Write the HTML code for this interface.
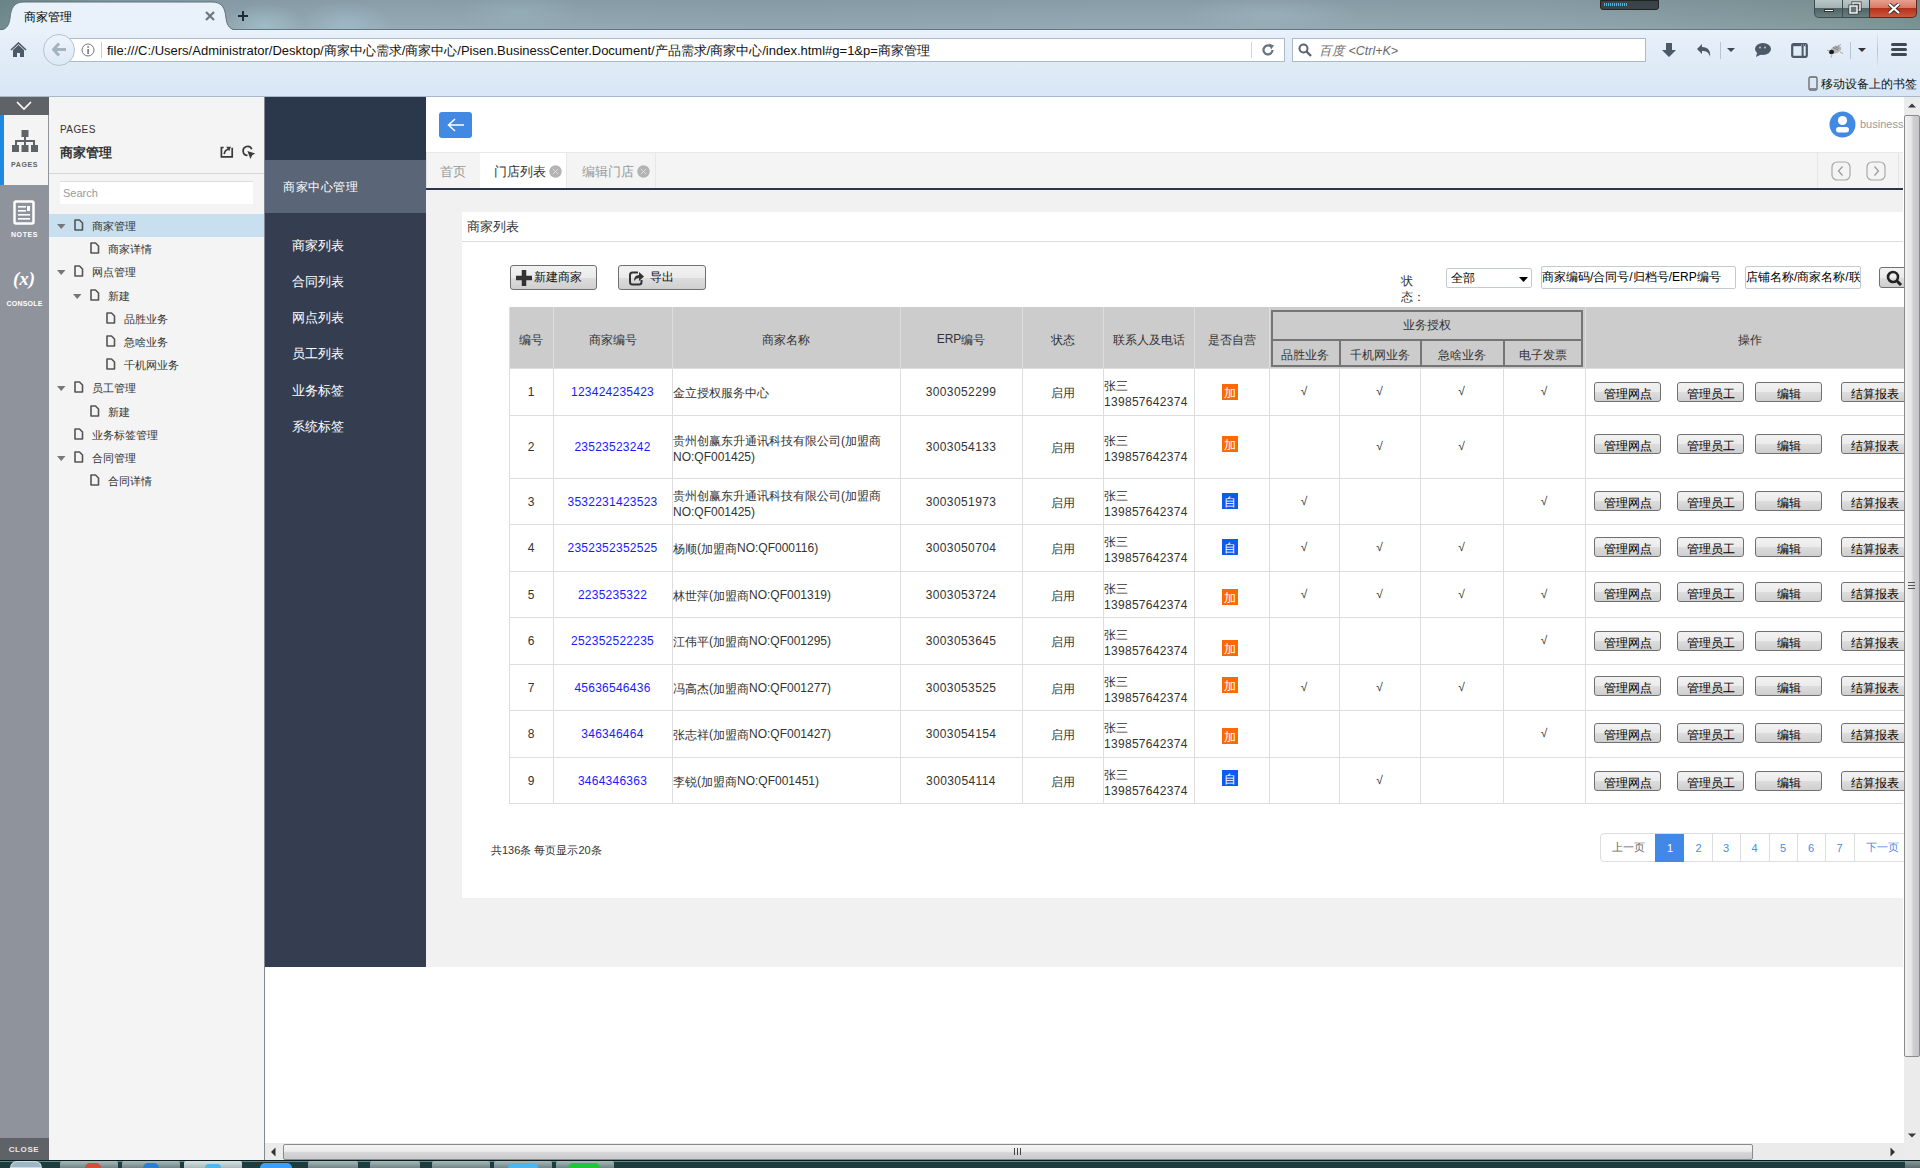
<!DOCTYPE html>
<html><head><meta charset="utf-8">
<style>
*{box-sizing:border-box;margin:0;padding:0}
html,body{width:1920px;height:1168px;overflow:hidden;background:#fff;font-family:"Liberation Sans",sans-serif;font-size:12px;color:#333;font-weight:500}
.a{position:absolute}
.nw{white-space:nowrap}
.c{position:relative;top:1px}
#titlebar{left:0;top:0;width:1920px;height:30px;background:radial-gradient(ellipse 40px 22px at 265px 26px,rgba(170,205,215,0.55),transparent),radial-gradient(ellipse 45px 24px at 345px 26px,rgba(165,200,215,0.5),transparent),radial-gradient(ellipse 60px 20px at 520px 12px,rgba(160,190,200,0.35),transparent),radial-gradient(ellipse 90px 18px at 1270px 14px,rgba(170,195,205,0.35),transparent),linear-gradient(180deg,rgba(60,75,85,0.12),rgba(255,255,255,0.04)),linear-gradient(90deg,#6f8a8c 0%,#8aa0aa 6%,#94a9b4 20%,#8fa4af 40%,#93a8b3 60%,#8fa4ae 80%,#809799 96%,#75908f 100%)}
#navbar{left:0;top:30px;width:1920px;height:67px;background:linear-gradient(#e9f1fa 0%,#e3edf8 30%,#d8e6f5 100%);border-bottom:1px solid #a8b8c8}
#content{left:0;top:97px;width:1920px;height:1063px;background:#fff}
#taskbar{left:0;top:1160px;width:1920px;height:8px;background:#1e3b3d}
.url{left:70px;top:38px;width:1215px;height:24px;background:#fff;border:1px solid #a9bacb;border-left:none}
.srch{left:1292px;top:38px;width:354px;height:24px;background:#fff;border:1px solid #a9bacb}
.ico{fill:#4a5460}
.btn{border:1px solid #707070;border-radius:3px;background:linear-gradient(#f2f2f2 0%,#ebebeb 50%,#dddddd 51%,#cfcfcf 100%)}
</style></head>
<body>
<!-- ===== Browser chrome ===== -->
<div id="titlebar" class="a"></div>
<div class="a" style="left:0;top:29px;width:1920px;height:1px;background:#62777f"></div>
<svg class="a" style="left:0;top:0" width="260" height="31">
 <path d="M-2 30.5 C6 30.5 9 26 10 18 C11 8 14 2 24 2 L212 2 C222 2 225 8 226 18 C227 26 230 30.5 238 30.5 Z" fill="#e9f1fa"/><path d="M-2 30 C6 30 9 26 10 18 C11 8 14 2 24 2 L212 2 C222 2 225 8 226 18 C227 26 230 30 238 30" fill="none" stroke="#5e7378" stroke-width="1"/>
</svg>
<div class="a nw" style="left:24px;top:9px;font-size:12px;color:#000">商家管理</div>
<svg class="a" style="left:205px;top:11px" width="10" height="10"><path d="M1 1L9 9M9 1L1 9" stroke="#6e7780" stroke-width="2.2"/></svg>
<svg class="a" style="left:237px;top:10px" width="12" height="12"><path d="M1 6H11M6 1V11" stroke="#1e2a36" stroke-width="2"/></svg>
<!-- top-right widget -->
<div class="a" style="left:1600px;top:0;width:59px;height:10px;background:#39434a;border-radius:0 0 3px 3px;border:1px solid #222"></div>
<div class="a" style="left:1604px;top:3px;width:24px;height:3px;background:repeating-linear-gradient(90deg,#4fb4e8 0 1px,transparent 1px 2px)"></div>
<!-- window buttons -->
<div class="a" style="left:1814px;top:0;width:56px;height:18px;border:1px solid #3c4d50;border-top:none;border-radius:0 0 0 5px;background:linear-gradient(#b9c7c7 0%,#a3b3b3 45%,#4f6466 50%,#6a7e7f 100%)"></div>
<div class="a" style="left:1842px;top:0;width:1px;height:17px;background:#3c4d50"></div>
<div class="a" style="left:1869px;top:0;width:48px;height:18px;border:1px solid #5a2a20;border-top:none;border-radius:0 0 5px 0;background:linear-gradient(#e8a090 0%,#d77a66 45%,#b8301a 50%,#c65a40 100%)"></div>
<div class="a" style="left:1824px;top:9px;width:10px;height:3px;background:#fff;border:0.5px solid #333"></div>
<svg class="a" style="left:1848px;top:1px" width="14" height="14"><rect x="5" y="2" width="7" height="7" fill="none" stroke="#333" stroke-width="3"/><rect x="5" y="2" width="7" height="7" fill="none" stroke="#f4f4f4" stroke-width="1.5"/><rect x="2" y="5" width="7" height="7" fill="#62787a" stroke="#333" stroke-width="3"/><rect x="2" y="5" width="7" height="7" fill="#62787a" stroke="#f4f4f4" stroke-width="1.5"/></svg>
<svg class="a" style="left:1887px;top:3px" width="14" height="11"><path d="M2 1L12 10M12 1L2 10" stroke="#333" stroke-width="4"/><path d="M2 1L12 10M12 1L2 10" stroke="#fff" stroke-width="2.2"/></svg>

<div id="navbar" class="a"></div>
<!-- home -->
<svg class="a" style="left:10px;top:42px" width="17" height="16"><path d="M1 8L8.5 1L16 8" fill="none" stroke="#4d5966" stroke-width="1.6"/><path d="M3 8L8.5 3L14 8V15H10V11H7V15H3Z" fill="#4d5966"/></svg>
<!-- url box -->
<div class="a url"></div>
<div class="a" style="left:1251px;top:42px;width:1px;height:16px;background:#d0d6de"></div>
<!-- back btn -->
<div class="a" style="left:43px;top:34px;width:32px;height:32px;border-radius:50%;background:linear-gradient(#eef4fb,#dde9f6);border:1px solid #b3c3d3"></div>
<svg class="a" style="left:52px;top:42px" width="15" height="15"><path d="M7 1.5L1.5 7.5L7 13.5M2 7.5H14" fill="none" stroke="#a5b2bf" stroke-width="3"/></svg>
<svg class="a" style="left:81px;top:43px" width="14" height="14"><circle cx="7" cy="7" r="6" fill="none" stroke="#777" stroke-width="1"/><rect x="6.3" y="6" width="1.6" height="5" fill="#777"/><rect x="6.3" y="3.2" width="1.6" height="1.6" fill="#777"/></svg>
<div class="a" style="left:101px;top:42px;width:1px;height:16px;background:#c8cfd8"></div>
<div class="a nw" style="left:107px;top:42px;font-size:13px;color:#111">file:///C:/Users/Administrator/Desktop/商家中心需求/商家中心/Pisen.BusinessCenter.Document/产品需求/商家中心/index.html#g=1&amp;p=商家管理</div>
<svg class="a" style="left:1261px;top:43px" width="14" height="14"><path d="M11.5 7A4.5 4.5 0 1 1 9.5 3.2" fill="none" stroke="#66727e" stroke-width="2.2"/><path d="M8 0.5L13 2.5L10 6.5Z" fill="#66727e"/></svg>
<!-- search box -->
<div class="a srch"></div>
<svg class="a" style="left:1298px;top:43px" width="14" height="14"><circle cx="5.5" cy="5.5" r="4" fill="none" stroke="#5b6570" stroke-width="2"/><path d="M8.5 8.5L13 13" stroke="#5b6570" stroke-width="2.4"/></svg>
<div class="a nw" style="left:1319px;top:43px;font-size:12.5px;color:#6a6a6a;font-style:italic">百度 &lt;Ctrl+K&gt;</div>
<!-- toolbar icons -->
<svg class="a" style="left:1661px;top:42px" width="16" height="16"><path d="M5 1H11V8H15L8 15L1 8H5Z" fill="#4d5966"/></svg>
<svg class="a" style="left:1696px;top:42px" width="18" height="16"><path d="M6 2L1 7L6 12V9C10 9 13 10 14 15C15 9 12 5 6 5Z" fill="#4d5966"/></svg>
<div class="a" style="left:1720px;top:42px;width:1px;height:17px;background:#b8c4d0"></div>
<svg class="a" style="left:1727px;top:48px" width="8" height="5"><path d="M0 0H8L4 4Z" fill="#3d4853"/></svg>
<svg class="a" style="left:1754px;top:42px" width="18" height="16"><ellipse cx="9" cy="7" rx="8" ry="6" fill="#4d5966"/><path d="M3 11L2 15L8 12Z" fill="#4d5966"/><circle cx="6" cy="5.5" r="0.9" fill="#ccd"/><circle cx="11" cy="5.5" r="0.9" fill="#ccd"/></svg>
<svg class="a" style="left:1791px;top:43px" width="17" height="15"><rect x="1.2" y="1.2" width="14.6" height="12.6" rx="1.2" fill="none" stroke="#4d5966" stroke-width="2.2"/><rect x="1" y="1" width="15" height="2.2" fill="#4d5966"/><rect x="10.6" y="2" width="2" height="12" fill="#4d5966"/><circle cx="10.5" cy="2" r="0.5" fill="#dde"/><circle cx="12.5" cy="2" r="0.5" fill="#dde"/><circle cx="14.5" cy="2" r="0.5" fill="#dde"/></svg>
<svg class="a" style="left:1826px;top:43px" width="18" height="15"><ellipse cx="10" cy="6.5" rx="5.5" ry="3.6" fill="#b5b5b5" transform="rotate(-20 10 6.5)"/><path d="M7 4.5L12 7M9 3.5L13 5.5" stroke="#666" stroke-width="0.7"/><ellipse cx="5.5" cy="9" rx="2.6" ry="2.2" fill="#1e1e1e"/><path d="M1 7L4 8.5M6 12L5 14.5M14 9L17 10.5M12 3L15 1.5" stroke="#888" stroke-width="0.7"/></svg>
<div class="a" style="left:1850px;top:42px;width:1px;height:17px;background:#b8c4d0"></div>
<svg class="a" style="left:1858px;top:48px" width="8" height="5"><path d="M0 0H8L4 4Z" fill="#333"/></svg>
<div class="a" style="left:1877px;top:31px;width:1px;height:38px;background:linear-gradient(rgba(160,175,190,0),#b5c2cf,rgba(160,175,190,0))"></div>
<svg class="a" style="left:1890px;top:42px" width="18" height="15"><rect x="1" y="1" width="16" height="3" rx="1.5" fill="#3d4853"/><rect x="1" y="6" width="16" height="3" rx="1.5" fill="#3d4853"/><rect x="1" y="11" width="16" height="3" rx="1.5" fill="#3d4853"/></svg>
<!-- bookmarks -->
<svg class="a" style="left:1808px;top:76px" width="10" height="15"><rect x="1" y="1" width="8" height="13" rx="1.5" fill="none" stroke="#666" stroke-width="1.3"/><rect x="2" y="12" width="6" height="1" fill="#888"/></svg>
<div class="a nw" style="left:1821px;top:76px;font-size:12px;color:#111">移动设备上的书签</div>

<div id="content" class="a"></div>

<!-- ===== Axure left panel ===== -->
<div class="a" style="left:0;top:97px;width:49px;height:1063px;background:#8f939c"></div>
<div class="a" style="left:0;top:97px;width:49px;height:18px;background:#5f6368"></div>
<svg class="a" style="left:15px;top:100px" width="18" height="11"><path d="M2 2L9 9L16 2" fill="none" stroke="#fff" stroke-width="1.6"/></svg>
<div class="a" style="left:0;top:115px;width:48px;height:70px;background:#f4f4f4"></div>
<div class="a" style="left:0;top:115px;width:4px;height:70px;background:#1e88e5"></div>
<svg class="a" style="left:12px;top:130px" width="26" height="25"><rect x="9.5" y="0" width="7" height="7" fill="#5f6368"/><rect x="12" y="7" width="2" height="4" fill="#5f6368"/><rect x="3" y="10" width="20" height="2" fill="#5f6368"/><rect x="3" y="10" width="2" height="5" fill="#5f6368"/><rect x="12" y="10" width="2" height="5" fill="#5f6368"/><rect x="21" y="10" width="2" height="5" fill="#5f6368"/><rect x="0" y="15" width="7" height="7" fill="#5f6368"/><rect x="9.5" y="15" width="7" height="7" fill="#5f6368"/><rect x="19" y="15" width="7" height="7" fill="#5f6368"/></svg>
<div class="a nw" style="left:0;top:161px;width:49px;text-align:center;font-size:7px;letter-spacing:0.6px;font-weight:bold;color:#5f6368">PAGES</div>
<svg class="a" style="left:13px;top:200px" width="22" height="26"><rect x="1.5" y="1.5" width="19" height="22" rx="1.5" fill="none" stroke="#fff" stroke-width="2.5"/><rect x="5" y="6" width="8" height="1.6" fill="#fff"/><rect x="14" y="6" width="3" height="5" fill="#fff"/><rect x="5" y="10" width="8" height="1.6" fill="#fff"/><rect x="5" y="14" width="12" height="1.6" fill="#fff"/><rect x="5" y="18" width="12" height="1.6" fill="#fff"/></svg>
<div class="a nw" style="left:0;top:231px;width:49px;text-align:center;font-size:7px;letter-spacing:0.6px;font-weight:bold;color:#fff">NOTES</div>
<div class="a nw" style="left:0;top:268px;width:48px;text-align:center;font-family:'Liberation Serif',serif;font-style:italic;font-weight:bold;font-size:19px;color:#fff">(x)</div>
<div class="a nw" style="left:0;top:300px;width:49px;text-align:center;font-size:7px;letter-spacing:0.2px;font-weight:bold;color:#fff">CONSOLE</div>
<div class="a" style="left:0;top:1138px;width:49px;height:22px;background:#5f6368"></div>
<div class="a nw" style="left:0;top:1145px;width:48px;text-align:center;font-size:8px;letter-spacing:0.6px;font-weight:bold;color:#e8e8e8">CLOSE</div>

<div class="a" style="left:49px;top:97px;width:215px;height:1063px;background:#f4f4f4"></div>
<div class="a nw" style="left:60px;top:124px;font-size:10px;letter-spacing:0.4px;color:#333">PAGES</div>
<div class="a nw" style="left:60px;top:144px;font-size:13px;font-weight:bold;color:#333">商家管理</div>
<svg class="a" style="left:220px;top:146px" width="15" height="13"><path d="M3.6 1.5H1.4V10.8H12.2V1.8" fill="none" stroke="#3a3a3a" stroke-width="1.7"/><path d="M4.2 8.2C4.6 5.5 6 3.8 8.2 3.3" fill="none" stroke="#3a3a3a" stroke-width="1.6"/><path d="M6.2 0.8H10.9L9.2 5.2Z" fill="#3a3a3a"/></svg>
<svg class="a" style="left:242px;top:145px" width="15" height="15"><path d="M9.8 4.2A4.5 4.5 0 1 0 5.5 10.4" fill="none" stroke="#3a3a3a" stroke-width="1.7"/><path d="M5.4 6L13.2 8.6L10.2 10.2L8.4 14Z" fill="#3a3a3a"/></svg>
<div class="a" style="left:49px;top:173px;width:215px;height:1px;background:#d6d6d6"></div>
<div class="a" style="left:60px;top:181px;width:193px;height:23px;background:#fff;border-top:1px solid #dcdcdc"></div>
<div class="a nw" style="left:63px;top:187px;font-size:11px;color:#9a9a9a">Search</div>
<div class="a" style="left:49px;top:214px;width:215px;height:23px;background:#c8dff0"></div>
<svg class="a" style="left:57px;top:224px" width="9" height="6"><path d="M0 0H8.5L4.25 5Z" fill="#777"/></svg>
<svg class="a" style="left:74px;top:219px" width="10" height="12"><path d="M1 1H5.5L8.5 4V11H1Z" fill="none" stroke="#555" stroke-width="1.6" stroke-linejoin="round"/></svg>
<div class="a nw" style="left:92px;top:219px;font-size:11px;color:#333">商家管理</div>
<svg class="a" style="left:90px;top:242px" width="10" height="12"><path d="M1 1H5.5L8.5 4V11H1Z" fill="none" stroke="#555" stroke-width="1.6" stroke-linejoin="round"/></svg>
<div class="a nw" style="left:108px;top:242px;font-size:11px;color:#333">商家详情</div>
<svg class="a" style="left:57px;top:270px" width="9" height="6"><path d="M0 0H8.5L4.25 5Z" fill="#777"/></svg>
<svg class="a" style="left:74px;top:265px" width="10" height="12"><path d="M1 1H5.5L8.5 4V11H1Z" fill="none" stroke="#555" stroke-width="1.6" stroke-linejoin="round"/></svg>
<div class="a nw" style="left:92px;top:265px;font-size:11px;color:#333">网点管理</div>
<svg class="a" style="left:73px;top:294px" width="9" height="6"><path d="M0 0H8.5L4.25 5Z" fill="#777"/></svg>
<svg class="a" style="left:90px;top:289px" width="10" height="12"><path d="M1 1H5.5L8.5 4V11H1Z" fill="none" stroke="#555" stroke-width="1.6" stroke-linejoin="round"/></svg>
<div class="a nw" style="left:108px;top:289px;font-size:11px;color:#333">新建</div>
<svg class="a" style="left:106px;top:312px" width="10" height="12"><path d="M1 1H5.5L8.5 4V11H1Z" fill="none" stroke="#555" stroke-width="1.6" stroke-linejoin="round"/></svg>
<div class="a nw" style="left:124px;top:312px;font-size:11px;color:#333">品胜业务</div>
<svg class="a" style="left:106px;top:335px" width="10" height="12"><path d="M1 1H5.5L8.5 4V11H1Z" fill="none" stroke="#555" stroke-width="1.6" stroke-linejoin="round"/></svg>
<div class="a nw" style="left:124px;top:335px;font-size:11px;color:#333">急啥业务</div>
<svg class="a" style="left:106px;top:358px" width="10" height="12"><path d="M1 1H5.5L8.5 4V11H1Z" fill="none" stroke="#555" stroke-width="1.6" stroke-linejoin="round"/></svg>
<div class="a nw" style="left:124px;top:358px;font-size:11px;color:#333">千机网业务</div>
<svg class="a" style="left:57px;top:386px" width="9" height="6"><path d="M0 0H8.5L4.25 5Z" fill="#777"/></svg>
<svg class="a" style="left:74px;top:381px" width="10" height="12"><path d="M1 1H5.5L8.5 4V11H1Z" fill="none" stroke="#555" stroke-width="1.6" stroke-linejoin="round"/></svg>
<div class="a nw" style="left:92px;top:381px;font-size:11px;color:#333">员工管理</div>
<svg class="a" style="left:90px;top:405px" width="10" height="12"><path d="M1 1H5.5L8.5 4V11H1Z" fill="none" stroke="#555" stroke-width="1.6" stroke-linejoin="round"/></svg>
<div class="a nw" style="left:108px;top:405px;font-size:11px;color:#333">新建</div>
<svg class="a" style="left:74px;top:428px" width="10" height="12"><path d="M1 1H5.5L8.5 4V11H1Z" fill="none" stroke="#555" stroke-width="1.6" stroke-linejoin="round"/></svg>
<div class="a nw" style="left:92px;top:428px;font-size:11px;color:#333">业务标签管理</div>
<svg class="a" style="left:57px;top:456px" width="9" height="6"><path d="M0 0H8.5L4.25 5Z" fill="#777"/></svg>
<svg class="a" style="left:74px;top:451px" width="10" height="12"><path d="M1 1H5.5L8.5 4V11H1Z" fill="none" stroke="#555" stroke-width="1.6" stroke-linejoin="round"/></svg>
<div class="a nw" style="left:92px;top:451px;font-size:11px;color:#333">合同管理</div>
<svg class="a" style="left:90px;top:474px" width="10" height="12"><path d="M1 1H5.5L8.5 4V11H1Z" fill="none" stroke="#555" stroke-width="1.6" stroke-linejoin="round"/></svg>
<div class="a nw" style="left:108px;top:474px;font-size:11px;color:#333">合同详情</div>
<div class="a" style="left:264px;top:97px;width:1px;height:1063px;background:#828891"></div>

<!-- ===== dark sidebar ===== -->
<div class="a" style="left:265px;top:97px;width:161px;height:870px;background:#353e50"></div>
<div class="a" style="left:265px;top:97px;width:161px;height:63px;background:#2b384b"></div>
<div class="a" style="left:265px;top:160px;width:161px;height:53px;background:#5b6578"></div>
<div class="a nw" style="left:283px;top:179px;font-size:12px;letter-spacing:0.5px;color:#fff">商家中心管理</div>
<div class="a nw" style="left:292px;top:237px;font-size:13px;color:#fff">商家列表</div>
<div class="a nw" style="left:292px;top:273px;font-size:13px;color:#fff">合同列表</div>
<div class="a nw" style="left:292px;top:309px;font-size:13px;color:#fff">网点列表</div>
<div class="a nw" style="left:292px;top:345px;font-size:13px;color:#fff">员工列表</div>
<div class="a nw" style="left:292px;top:382px;font-size:13px;color:#fff">业务标签</div>
<div class="a nw" style="left:292px;top:418px;font-size:13px;color:#fff">系统标签</div>
<!-- ===== main header ===== -->
<div class="a" style="left:426px;top:97px;width:1477px;height:55px;background:#fff"></div>
<div class="a" style="left:439px;top:112px;width:33px;height:26px;border-radius:3px;background:#4289e4"></div>
<svg class="a" style="left:446px;top:117px" width="20" height="16"><path d="M9 2L2.5 8L9 14M3 8H18" fill="none" stroke="#fff" stroke-width="1.5"/></svg>
<svg class="a" style="left:1829px;top:111px" width="27" height="27"><circle cx="13.5" cy="13.5" r="13" fill="#4289e4"/><circle cx="13.5" cy="9.5" r="4.6" fill="#fff"/><rect x="7" y="16" width="13" height="5.5" rx="2.7" fill="#fff"/></svg>
<div class="a nw" style="left:1860px;top:118px;font-size:11px;color:#9a9a9a">business</div>
<!-- tab bar -->
<div class="a" style="left:426px;top:152px;width:1477px;height:36px;background:#f4f4f4;border-top:1px solid #e9e9e9;border-left:1px solid #e2e2e2"></div>
<div class="a" style="left:480px;top:153px;width:87px;height:35px;background:#fff"></div>
<div class="a" style="left:566px;top:152px;width:1px;height:36px;background:#e8e8e8"></div>
<div class="a" style="left:655px;top:152px;width:1px;height:36px;background:#e8e8e8"></div>
<div class="a nw" style="left:440px;top:164px;font-size:12.5px;color:#999">首页</div>
<div class="a nw" style="left:494px;top:164px;font-size:12.5px;color:#333">门店列表</div>
<div class="a nw" style="left:582px;top:164px;font-size:12.5px;color:#999">编辑门店</div>
<svg class="a" style="left:549px;top:165px" width="13" height="13"><circle cx="6.5" cy="6.5" r="6.2" fill="#b3b3b3"/><path d="M3.8 3.8L9.2 9.2M9.2 3.8L3.8 9.2" stroke="#e2e2e2" stroke-width="0.9"/></svg>
<svg class="a" style="left:637px;top:165px" width="13" height="13"><circle cx="6.5" cy="6.5" r="6.2" fill="#b3b3b3"/><path d="M3.8 3.8L9.2 9.2M9.2 3.8L3.8 9.2" stroke="#e2e2e2" stroke-width="0.9"/></svg>
<div class="a" style="left:1817px;top:152px;width:1px;height:36px;background:#e6e6e6"></div>
<div class="a" style="left:1898px;top:152px;width:1px;height:36px;background:#e6e6e6"></div>
<svg class="a" style="left:1831px;top:161px" width="20" height="20"><rect x="1" y="1" width="18" height="18" rx="5" fill="none" stroke="#a8a8a8" stroke-width="1.2"/><path d="M11.5 5.5L7.5 10L11.5 14.5" fill="none" stroke="#999" stroke-width="1.2"/></svg>
<svg class="a" style="left:1866px;top:161px" width="20" height="20"><rect x="1" y="1" width="18" height="18" rx="5" fill="none" stroke="#a8a8a8" stroke-width="1.2"/><path d="M8.5 5.5L12.5 10L8.5 14.5" fill="none" stroke="#999" stroke-width="1.2"/></svg>
<div class="a" style="left:426px;top:188px;width:1477px;height:2px;background:#2b3649"></div>
<!-- content bg -->
<div class="a" style="left:426px;top:190px;width:1477px;height:777px;background:#f1f1f1"></div>
<div class="a" style="left:462px;top:212px;width:1441px;height:686px;background:#fff"></div>
<div class="a nw" style="left:467px;top:218px;font-size:13px;color:#333">商家列表</div>
<div class="a" style="left:462px;top:241px;width:1441px;height:1px;background:#ddd"></div>
<!--TABLE-->
<div class="a btn" style="left:510px;top:265px;width:87px;height:25px"></div>
<svg class="a" style="left:516px;top:270px" width="16" height="16"><path d="M6 0H10V6H16V10H10V16H6V10H0V6H6Z" fill="#333" stroke="#333" stroke-width="0.5" stroke-linejoin="round"/></svg>
<div class="a nw" style="left:534px;top:270px;font-size:12px;line-height:14px;color:#111">新建商家</div>
<div class="a btn" style="left:618px;top:265px;width:88px;height:25px"></div>
<svg class="a" style="left:628px;top:269px" width="17" height="17"><path d="M10 3.5H4.5Q2 3.5 2 6V13Q2 15.5 4.5 15.5H11Q13.5 15.5 13.5 13V11" fill="none" stroke="#333" stroke-width="2"/><path d="M6 12Q6 6 11 6V3L16 7.5L11 12V9Q8 9 6 12Z" fill="#333"/></svg>
<div class="a nw" style="left:650px;top:270px;font-size:12px;line-height:14px;color:#111">导出</div>
<div class="a nw" style="left:1401px;top:273px;font-size:12px;line-height:16px;color:#333">状<br>态：</div>
<div class="a" style="left:1446px;top:268px;width:86px;height:20px;background:#fff;border:1px solid #c4c9d2;border-radius:2px"></div>
<div class="a nw" style="left:1451px;top:271px;font-size:12px;line-height:14px;color:#000">全部</div>
<svg class="a" style="left:1519px;top:277px" width="9" height="5"><path d="M0 0H9L4.5 5Z" fill="#000"/></svg>
<div class="a" style="left:1541px;top:266px;width:195px;height:23px;background:#fff;border:1px solid #c4c9d2;border-radius:2px"></div>
<div class="a nw" style="left:1542px;top:270px;font-size:12px;line-height:14px;color:#000">商家编码/合同号/归档号/ERP编号</div>
<div class="a" style="left:1745px;top:266px;width:116px;height:23px;background:#fff;border:1px solid #c4c9d2;border-radius:2px;overflow:hidden"><div class="nw" style="position:absolute;left:0;top:3px;font-size:12px;line-height:14px;color:#000">店铺名称/商家名称/联系人</div></div>
<div class="a btn" style="left:1879px;top:267px;width:40px;height:21px"></div>
<svg class="a" style="left:1886px;top:270px" width="18" height="16"><circle cx="7" cy="7" r="5" fill="none" stroke="#222" stroke-width="2.6"/><path d="M10.5 10.5L15 15" stroke="#222" stroke-width="3"/></svg>

<div class="a" style="left:509px;top:307px;width:1400px;height:61px;background:#ccc"></div>
<div class="a" style="left:509px;top:307px;width:1px;height:496px;background:#ddd"></div>
<div class="a" style="left:553px;top:307px;width:1px;height:496px;background:#ddd"></div>
<div class="a" style="left:672px;top:307px;width:1px;height:496px;background:#ddd"></div>
<div class="a" style="left:900px;top:307px;width:1px;height:496px;background:#ddd"></div>
<div class="a" style="left:1022px;top:307px;width:1px;height:496px;background:#ddd"></div>
<div class="a" style="left:1103px;top:307px;width:1px;height:496px;background:#ddd"></div>
<div class="a" style="left:1194px;top:307px;width:1px;height:496px;background:#ddd"></div>
<div class="a" style="left:1269px;top:307px;width:1px;height:496px;background:#ddd"></div>
<div class="a" style="left:1339px;top:368px;width:1px;height:435px;background:#ddd"></div>
<div class="a" style="left:1420px;top:368px;width:1px;height:435px;background:#ddd"></div>
<div class="a" style="left:1503px;top:368px;width:1px;height:435px;background:#ddd"></div>
<div class="a" style="left:1585px;top:307px;width:1px;height:496px;background:#ddd"></div>
<div class="a" style="left:509px;top:368px;width:1400px;height:1px;background:#ddd"></div>
<div class="a" style="left:509px;top:415px;width:1400px;height:1px;background:#ddd"></div>
<div class="a" style="left:509px;top:478px;width:1400px;height:1px;background:#ddd"></div>
<div class="a" style="left:509px;top:524px;width:1400px;height:1px;background:#ddd"></div>
<div class="a" style="left:509px;top:571px;width:1400px;height:1px;background:#ddd"></div>
<div class="a" style="left:509px;top:617px;width:1400px;height:1px;background:#ddd"></div>
<div class="a" style="left:509px;top:664px;width:1400px;height:1px;background:#ddd"></div>
<div class="a" style="left:509px;top:710px;width:1400px;height:1px;background:#ddd"></div>
<div class="a" style="left:509px;top:757px;width:1400px;height:1px;background:#ddd"></div>
<div class="a" style="left:509px;top:803px;width:1394px;height:1px;background:#ddd"></div>
<div class="a" style="left:1271px;top:310px;width:312px;height:57px;border:2px solid #757575"></div>
<div class="a" style="left:1271px;top:339px;width:312px;height:2px;background:#757575"></div>
<div class="a" style="left:1339px;top:340px;width:2px;height:26px;background:#757575"></div>
<div class="a" style="left:1420px;top:340px;width:2px;height:26px;background:#757575"></div>
<div class="a" style="left:1503px;top:340px;width:2px;height:26px;background:#757575"></div>
<div class="a nw" style="left:509px;top:332px;width:44px;text-align:center;font-size:12px;line-height:14px;color:#333"><span class="c">编号</span></div>
<div class="a nw" style="left:553px;top:332px;width:119px;text-align:center;font-size:12px;line-height:14px;color:#333"><span class="c">商家编号</span></div>
<div class="a nw" style="left:672px;top:332px;width:228px;text-align:center;font-size:12px;line-height:14px;color:#333"><span class="c">商家名称</span></div>
<div class="a nw" style="left:900px;top:332px;width:122px;text-align:center;font-size:12px;line-height:14px;color:#333">ERP<span class="c">编号</span></div>
<div class="a nw" style="left:1022px;top:332px;width:81px;text-align:center;font-size:12px;line-height:14px;color:#333"><span class="c">状态</span></div>
<div class="a nw" style="left:1103px;top:332px;width:91px;text-align:center;font-size:12px;line-height:14px;color:#333"><span class="c">联系人及电话</span></div>
<div class="a nw" style="left:1194px;top:332px;width:75px;text-align:center;font-size:12px;line-height:14px;color:#333"><span class="c">是否自营</span></div>
<div class="a nw" style="left:1585px;top:332px;width:330px;text-align:center;font-size:12px;line-height:14px;color:#333"><span class="c">操作</span></div>
<div class="a nw" style="left:1271px;top:317px;width:312px;text-align:center;font-size:12px;line-height:14px;color:#333"><span class="c">业务授权</span></div>
<div class="a nw" style="left:1271px;top:347px;width:68px;text-align:center;font-size:12px;line-height:14px;color:#333"><span class="c">品胜业务</span></div>
<div class="a nw" style="left:1339px;top:347px;width:81px;text-align:center;font-size:12px;line-height:14px;color:#333"><span class="c">千机网业务</span></div>
<div class="a nw" style="left:1420px;top:347px;width:83px;text-align:center;font-size:12px;line-height:14px;color:#333"><span class="c">急啥业务</span></div>
<div class="a nw" style="left:1503px;top:347px;width:80px;text-align:center;font-size:12px;line-height:14px;color:#333"><span class="c">电子发票</span></div>
<div class="a nw" style="left:509px;top:385px;width:44px;text-align:center;font-size:12px;line-height:14px;color:#333">1</div>
<div class="a nw" style="left:553px;top:385px;width:119px;text-align:center;font-size:12px;line-height:14px;color:#1a1aff;letter-spacing:0.25px">123424235423</div>
<div class="a nw" style="left:673px;top:385px;font-size:12px;line-height:14px;color:#333"><span class="c">金立授权服务中心</span></div>
<div class="a nw" style="left:900px;top:385px;width:122px;text-align:center;font-size:12px;line-height:14px;color:#333;letter-spacing:0.4px">3003052299</div>
<div class="a nw" style="left:1022px;top:385px;width:81px;text-align:center;font-size:12px;line-height:14px;color:#333"><span class="c">启用</span></div>
<div class="a nw" style="left:1104px;top:378px;font-size:12px;line-height:16px;color:#333">张三<br><span style="letter-spacing:0.3px">139857642374</span></div>
<div class="a" style="left:1222px;top:384px;width:16px;height:16px;background:#ff6a00"></div>
<div class="a nw" style="left:1222px;top:386px;width:16px;text-align:center;font-size:12px;line-height:14px;color:#fff">加</div>
<div class="a nw" style="left:1269px;top:384px;width:70px;text-align:center;font-size:12px;line-height:14px;color:#333;font-size:12px">√</div>
<div class="a nw" style="left:1339px;top:384px;width:81px;text-align:center;font-size:12px;line-height:14px;color:#333;font-size:12px">√</div>
<div class="a nw" style="left:1420px;top:384px;width:83px;text-align:center;font-size:12px;line-height:14px;color:#333;font-size:12px">√</div>
<div class="a nw" style="left:1503px;top:384px;width:82px;text-align:center;font-size:12px;line-height:14px;color:#333;font-size:12px">√</div>
<div class="a btn" style="left:1594px;top:382px;width:67px;height:20px"></div>
<div class="a nw" style="left:1594px;top:386px;width:67px;text-align:center;font-size:12px;line-height:14px;color:#000"><span class="c">管理网点</span></div>
<div class="a btn" style="left:1677px;top:382px;width:67px;height:20px"></div>
<div class="a nw" style="left:1677px;top:386px;width:67px;text-align:center;font-size:12px;line-height:14px;color:#000"><span class="c">管理员工</span></div>
<div class="a btn" style="left:1755px;top:382px;width:67px;height:20px"></div>
<div class="a nw" style="left:1755px;top:386px;width:67px;text-align:center;font-size:12px;line-height:14px;color:#000"><span class="c">编辑</span></div>
<div class="a btn" style="left:1841px;top:382px;width:80px;height:20px"></div>
<div class="a nw" style="left:1841px;top:386px;width:67px;text-align:center;font-size:12px;line-height:14px;color:#000"><span class="c">结算报表</span></div>
<div class="a nw" style="left:509px;top:440px;width:44px;text-align:center;font-size:12px;line-height:14px;color:#333">2</div>
<div class="a nw" style="left:553px;top:440px;width:119px;text-align:center;font-size:12px;line-height:14px;color:#1a1aff;letter-spacing:0.25px">23523523242</div>
<div class="a nw" style="left:673px;top:433px;font-size:12px;line-height:16px;color:#333">贵州创赢东升通讯科技有限公司(加盟商<br>NO:QF001425)</div>
<div class="a nw" style="left:900px;top:440px;width:122px;text-align:center;font-size:12px;line-height:14px;color:#333;letter-spacing:0.4px">3003054133</div>
<div class="a nw" style="left:1022px;top:440px;width:81px;text-align:center;font-size:12px;line-height:14px;color:#333"><span class="c">启用</span></div>
<div class="a nw" style="left:1104px;top:433px;font-size:12px;line-height:16px;color:#333">张三<br><span style="letter-spacing:0.3px">139857642374</span></div>
<div class="a" style="left:1222px;top:436px;width:16px;height:16px;background:#ff6a00"></div>
<div class="a nw" style="left:1222px;top:438px;width:16px;text-align:center;font-size:12px;line-height:14px;color:#fff">加</div>
<div class="a nw" style="left:1339px;top:439px;width:81px;text-align:center;font-size:12px;line-height:14px;color:#333;font-size:12px">√</div>
<div class="a nw" style="left:1420px;top:439px;width:83px;text-align:center;font-size:12px;line-height:14px;color:#333;font-size:12px">√</div>
<div class="a btn" style="left:1594px;top:434px;width:67px;height:20px"></div>
<div class="a nw" style="left:1594px;top:438px;width:67px;text-align:center;font-size:12px;line-height:14px;color:#000"><span class="c">管理网点</span></div>
<div class="a btn" style="left:1677px;top:434px;width:67px;height:20px"></div>
<div class="a nw" style="left:1677px;top:438px;width:67px;text-align:center;font-size:12px;line-height:14px;color:#000"><span class="c">管理员工</span></div>
<div class="a btn" style="left:1755px;top:434px;width:67px;height:20px"></div>
<div class="a nw" style="left:1755px;top:438px;width:67px;text-align:center;font-size:12px;line-height:14px;color:#000"><span class="c">编辑</span></div>
<div class="a btn" style="left:1841px;top:434px;width:80px;height:20px"></div>
<div class="a nw" style="left:1841px;top:438px;width:67px;text-align:center;font-size:12px;line-height:14px;color:#000"><span class="c">结算报表</span></div>
<div class="a nw" style="left:509px;top:495px;width:44px;text-align:center;font-size:12px;line-height:14px;color:#333">3</div>
<div class="a nw" style="left:553px;top:495px;width:119px;text-align:center;font-size:12px;line-height:14px;color:#1a1aff;letter-spacing:0.25px">3532231423523</div>
<div class="a nw" style="left:673px;top:488px;font-size:12px;line-height:16px;color:#333">贵州创赢东升通讯科技有限公司(加盟商<br>NO:QF001425)</div>
<div class="a nw" style="left:900px;top:495px;width:122px;text-align:center;font-size:12px;line-height:14px;color:#333;letter-spacing:0.4px">3003051973</div>
<div class="a nw" style="left:1022px;top:495px;width:81px;text-align:center;font-size:12px;line-height:14px;color:#333"><span class="c">启用</span></div>
<div class="a nw" style="left:1104px;top:488px;font-size:12px;line-height:16px;color:#333">张三<br><span style="letter-spacing:0.3px">139857642374</span></div>
<div class="a" style="left:1222px;top:493px;width:16px;height:16px;background:#0a5cf0"></div>
<div class="a nw" style="left:1222px;top:495px;width:16px;text-align:center;font-size:12px;line-height:14px;color:#fff">自</div>
<div class="a nw" style="left:1269px;top:494px;width:70px;text-align:center;font-size:12px;line-height:14px;color:#333;font-size:12px">√</div>
<div class="a nw" style="left:1503px;top:494px;width:82px;text-align:center;font-size:12px;line-height:14px;color:#333;font-size:12px">√</div>
<div class="a btn" style="left:1594px;top:491px;width:67px;height:20px"></div>
<div class="a nw" style="left:1594px;top:495px;width:67px;text-align:center;font-size:12px;line-height:14px;color:#000"><span class="c">管理网点</span></div>
<div class="a btn" style="left:1677px;top:491px;width:67px;height:20px"></div>
<div class="a nw" style="left:1677px;top:495px;width:67px;text-align:center;font-size:12px;line-height:14px;color:#000"><span class="c">管理员工</span></div>
<div class="a btn" style="left:1755px;top:491px;width:67px;height:20px"></div>
<div class="a nw" style="left:1755px;top:495px;width:67px;text-align:center;font-size:12px;line-height:14px;color:#000"><span class="c">编辑</span></div>
<div class="a btn" style="left:1841px;top:491px;width:80px;height:20px"></div>
<div class="a nw" style="left:1841px;top:495px;width:67px;text-align:center;font-size:12px;line-height:14px;color:#000"><span class="c">结算报表</span></div>
<div class="a nw" style="left:509px;top:541px;width:44px;text-align:center;font-size:12px;line-height:14px;color:#333">4</div>
<div class="a nw" style="left:553px;top:541px;width:119px;text-align:center;font-size:12px;line-height:14px;color:#1a1aff;letter-spacing:0.25px">2352352352525</div>
<div class="a nw" style="left:673px;top:541px;font-size:12px;line-height:14px;color:#333"><span class="c">杨顺</span>(<span class="c">加盟商</span>NO:QF000116)</div>
<div class="a nw" style="left:900px;top:541px;width:122px;text-align:center;font-size:12px;line-height:14px;color:#333;letter-spacing:0.4px">3003050704</div>
<div class="a nw" style="left:1022px;top:541px;width:81px;text-align:center;font-size:12px;line-height:14px;color:#333"><span class="c">启用</span></div>
<div class="a nw" style="left:1104px;top:534px;font-size:12px;line-height:16px;color:#333">张三<br><span style="letter-spacing:0.3px">139857642374</span></div>
<div class="a" style="left:1222px;top:539px;width:16px;height:16px;background:#0a5cf0"></div>
<div class="a nw" style="left:1222px;top:541px;width:16px;text-align:center;font-size:12px;line-height:14px;color:#fff">自</div>
<div class="a nw" style="left:1269px;top:540px;width:70px;text-align:center;font-size:12px;line-height:14px;color:#333;font-size:12px">√</div>
<div class="a nw" style="left:1339px;top:540px;width:81px;text-align:center;font-size:12px;line-height:14px;color:#333;font-size:12px">√</div>
<div class="a nw" style="left:1420px;top:540px;width:83px;text-align:center;font-size:12px;line-height:14px;color:#333;font-size:12px">√</div>
<div class="a btn" style="left:1594px;top:537px;width:67px;height:20px"></div>
<div class="a nw" style="left:1594px;top:541px;width:67px;text-align:center;font-size:12px;line-height:14px;color:#000"><span class="c">管理网点</span></div>
<div class="a btn" style="left:1677px;top:537px;width:67px;height:20px"></div>
<div class="a nw" style="left:1677px;top:541px;width:67px;text-align:center;font-size:12px;line-height:14px;color:#000"><span class="c">管理员工</span></div>
<div class="a btn" style="left:1755px;top:537px;width:67px;height:20px"></div>
<div class="a nw" style="left:1755px;top:541px;width:67px;text-align:center;font-size:12px;line-height:14px;color:#000"><span class="c">编辑</span></div>
<div class="a btn" style="left:1841px;top:537px;width:80px;height:20px"></div>
<div class="a nw" style="left:1841px;top:541px;width:67px;text-align:center;font-size:12px;line-height:14px;color:#000"><span class="c">结算报表</span></div>
<div class="a nw" style="left:509px;top:588px;width:44px;text-align:center;font-size:12px;line-height:14px;color:#333">5</div>
<div class="a nw" style="left:553px;top:588px;width:119px;text-align:center;font-size:12px;line-height:14px;color:#1a1aff;letter-spacing:0.25px">2235235322</div>
<div class="a nw" style="left:673px;top:588px;font-size:12px;line-height:14px;color:#333"><span class="c">林世萍</span>(<span class="c">加盟商</span>NO:QF001319)</div>
<div class="a nw" style="left:900px;top:588px;width:122px;text-align:center;font-size:12px;line-height:14px;color:#333;letter-spacing:0.4px">3003053724</div>
<div class="a nw" style="left:1022px;top:588px;width:81px;text-align:center;font-size:12px;line-height:14px;color:#333"><span class="c">启用</span></div>
<div class="a nw" style="left:1104px;top:581px;font-size:12px;line-height:16px;color:#333">张三<br><span style="letter-spacing:0.3px">139857642374</span></div>
<div class="a" style="left:1222px;top:589px;width:16px;height:16px;background:#ff6a00"></div>
<div class="a nw" style="left:1222px;top:591px;width:16px;text-align:center;font-size:12px;line-height:14px;color:#fff">加</div>
<div class="a nw" style="left:1269px;top:587px;width:70px;text-align:center;font-size:12px;line-height:14px;color:#333;font-size:12px">√</div>
<div class="a nw" style="left:1339px;top:587px;width:81px;text-align:center;font-size:12px;line-height:14px;color:#333;font-size:12px">√</div>
<div class="a nw" style="left:1420px;top:587px;width:83px;text-align:center;font-size:12px;line-height:14px;color:#333;font-size:12px">√</div>
<div class="a nw" style="left:1503px;top:587px;width:82px;text-align:center;font-size:12px;line-height:14px;color:#333;font-size:12px">√</div>
<div class="a btn" style="left:1594px;top:582px;width:67px;height:20px"></div>
<div class="a nw" style="left:1594px;top:586px;width:67px;text-align:center;font-size:12px;line-height:14px;color:#000"><span class="c">管理网点</span></div>
<div class="a btn" style="left:1677px;top:582px;width:67px;height:20px"></div>
<div class="a nw" style="left:1677px;top:586px;width:67px;text-align:center;font-size:12px;line-height:14px;color:#000"><span class="c">管理员工</span></div>
<div class="a btn" style="left:1755px;top:582px;width:67px;height:20px"></div>
<div class="a nw" style="left:1755px;top:586px;width:67px;text-align:center;font-size:12px;line-height:14px;color:#000"><span class="c">编辑</span></div>
<div class="a btn" style="left:1841px;top:582px;width:80px;height:20px"></div>
<div class="a nw" style="left:1841px;top:586px;width:67px;text-align:center;font-size:12px;line-height:14px;color:#000"><span class="c">结算报表</span></div>
<div class="a nw" style="left:509px;top:634px;width:44px;text-align:center;font-size:12px;line-height:14px;color:#333">6</div>
<div class="a nw" style="left:553px;top:634px;width:119px;text-align:center;font-size:12px;line-height:14px;color:#1a1aff;letter-spacing:0.25px">252352522235</div>
<div class="a nw" style="left:673px;top:634px;font-size:12px;line-height:14px;color:#333"><span class="c">江伟平</span>(<span class="c">加盟商</span>NO:QF001295)</div>
<div class="a nw" style="left:900px;top:634px;width:122px;text-align:center;font-size:12px;line-height:14px;color:#333;letter-spacing:0.4px">3003053645</div>
<div class="a nw" style="left:1022px;top:634px;width:81px;text-align:center;font-size:12px;line-height:14px;color:#333"><span class="c">启用</span></div>
<div class="a nw" style="left:1104px;top:627px;font-size:12px;line-height:16px;color:#333">张三<br><span style="letter-spacing:0.3px">139857642374</span></div>
<div class="a" style="left:1222px;top:640px;width:16px;height:16px;background:#ff6a00"></div>
<div class="a nw" style="left:1222px;top:642px;width:16px;text-align:center;font-size:12px;line-height:14px;color:#fff">加</div>
<div class="a nw" style="left:1503px;top:633px;width:82px;text-align:center;font-size:12px;line-height:14px;color:#333;font-size:12px">√</div>
<div class="a btn" style="left:1594px;top:631px;width:67px;height:20px"></div>
<div class="a nw" style="left:1594px;top:635px;width:67px;text-align:center;font-size:12px;line-height:14px;color:#000"><span class="c">管理网点</span></div>
<div class="a btn" style="left:1677px;top:631px;width:67px;height:20px"></div>
<div class="a nw" style="left:1677px;top:635px;width:67px;text-align:center;font-size:12px;line-height:14px;color:#000"><span class="c">管理员工</span></div>
<div class="a btn" style="left:1755px;top:631px;width:67px;height:20px"></div>
<div class="a nw" style="left:1755px;top:635px;width:67px;text-align:center;font-size:12px;line-height:14px;color:#000"><span class="c">编辑</span></div>
<div class="a btn" style="left:1841px;top:631px;width:80px;height:20px"></div>
<div class="a nw" style="left:1841px;top:635px;width:67px;text-align:center;font-size:12px;line-height:14px;color:#000"><span class="c">结算报表</span></div>
<div class="a nw" style="left:509px;top:681px;width:44px;text-align:center;font-size:12px;line-height:14px;color:#333">7</div>
<div class="a nw" style="left:553px;top:681px;width:119px;text-align:center;font-size:12px;line-height:14px;color:#1a1aff;letter-spacing:0.25px">45636546436</div>
<div class="a nw" style="left:673px;top:681px;font-size:12px;line-height:14px;color:#333"><span class="c">冯高杰</span>(<span class="c">加盟商</span>NO:QF001277)</div>
<div class="a nw" style="left:900px;top:681px;width:122px;text-align:center;font-size:12px;line-height:14px;color:#333;letter-spacing:0.4px">3003053525</div>
<div class="a nw" style="left:1022px;top:681px;width:81px;text-align:center;font-size:12px;line-height:14px;color:#333"><span class="c">启用</span></div>
<div class="a nw" style="left:1104px;top:674px;font-size:12px;line-height:16px;color:#333">张三<br><span style="letter-spacing:0.3px">139857642374</span></div>
<div class="a" style="left:1222px;top:677px;width:16px;height:16px;background:#ff6a00"></div>
<div class="a nw" style="left:1222px;top:679px;width:16px;text-align:center;font-size:12px;line-height:14px;color:#fff">加</div>
<div class="a nw" style="left:1269px;top:680px;width:70px;text-align:center;font-size:12px;line-height:14px;color:#333;font-size:12px">√</div>
<div class="a nw" style="left:1339px;top:680px;width:81px;text-align:center;font-size:12px;line-height:14px;color:#333;font-size:12px">√</div>
<div class="a nw" style="left:1420px;top:680px;width:83px;text-align:center;font-size:12px;line-height:14px;color:#333;font-size:12px">√</div>
<div class="a btn" style="left:1594px;top:676px;width:67px;height:20px"></div>
<div class="a nw" style="left:1594px;top:680px;width:67px;text-align:center;font-size:12px;line-height:14px;color:#000"><span class="c">管理网点</span></div>
<div class="a btn" style="left:1677px;top:676px;width:67px;height:20px"></div>
<div class="a nw" style="left:1677px;top:680px;width:67px;text-align:center;font-size:12px;line-height:14px;color:#000"><span class="c">管理员工</span></div>
<div class="a btn" style="left:1755px;top:676px;width:67px;height:20px"></div>
<div class="a nw" style="left:1755px;top:680px;width:67px;text-align:center;font-size:12px;line-height:14px;color:#000"><span class="c">编辑</span></div>
<div class="a btn" style="left:1841px;top:676px;width:80px;height:20px"></div>
<div class="a nw" style="left:1841px;top:680px;width:67px;text-align:center;font-size:12px;line-height:14px;color:#000"><span class="c">结算报表</span></div>
<div class="a nw" style="left:509px;top:727px;width:44px;text-align:center;font-size:12px;line-height:14px;color:#333">8</div>
<div class="a nw" style="left:553px;top:727px;width:119px;text-align:center;font-size:12px;line-height:14px;color:#1a1aff;letter-spacing:0.25px">346346464</div>
<div class="a nw" style="left:673px;top:727px;font-size:12px;line-height:14px;color:#333"><span class="c">张志祥</span>(<span class="c">加盟商</span>NO:QF001427)</div>
<div class="a nw" style="left:900px;top:727px;width:122px;text-align:center;font-size:12px;line-height:14px;color:#333;letter-spacing:0.4px">3003054154</div>
<div class="a nw" style="left:1022px;top:727px;width:81px;text-align:center;font-size:12px;line-height:14px;color:#333"><span class="c">启用</span></div>
<div class="a nw" style="left:1104px;top:720px;font-size:12px;line-height:16px;color:#333">张三<br><span style="letter-spacing:0.3px">139857642374</span></div>
<div class="a" style="left:1222px;top:728px;width:16px;height:16px;background:#ff6a00"></div>
<div class="a nw" style="left:1222px;top:730px;width:16px;text-align:center;font-size:12px;line-height:14px;color:#fff">加</div>
<div class="a nw" style="left:1503px;top:726px;width:82px;text-align:center;font-size:12px;line-height:14px;color:#333;font-size:12px">√</div>
<div class="a btn" style="left:1594px;top:723px;width:67px;height:20px"></div>
<div class="a nw" style="left:1594px;top:727px;width:67px;text-align:center;font-size:12px;line-height:14px;color:#000"><span class="c">管理网点</span></div>
<div class="a btn" style="left:1677px;top:723px;width:67px;height:20px"></div>
<div class="a nw" style="left:1677px;top:727px;width:67px;text-align:center;font-size:12px;line-height:14px;color:#000"><span class="c">管理员工</span></div>
<div class="a btn" style="left:1755px;top:723px;width:67px;height:20px"></div>
<div class="a nw" style="left:1755px;top:727px;width:67px;text-align:center;font-size:12px;line-height:14px;color:#000"><span class="c">编辑</span></div>
<div class="a btn" style="left:1841px;top:723px;width:80px;height:20px"></div>
<div class="a nw" style="left:1841px;top:727px;width:67px;text-align:center;font-size:12px;line-height:14px;color:#000"><span class="c">结算报表</span></div>
<div class="a nw" style="left:509px;top:774px;width:44px;text-align:center;font-size:12px;line-height:14px;color:#333">9</div>
<div class="a nw" style="left:553px;top:774px;width:119px;text-align:center;font-size:12px;line-height:14px;color:#1a1aff;letter-spacing:0.25px">3464346363</div>
<div class="a nw" style="left:673px;top:774px;font-size:12px;line-height:14px;color:#333"><span class="c">李锐</span>(<span class="c">加盟商</span>NO:QF001451)</div>
<div class="a nw" style="left:900px;top:774px;width:122px;text-align:center;font-size:12px;line-height:14px;color:#333;letter-spacing:0.4px">3003054114</div>
<div class="a nw" style="left:1022px;top:774px;width:81px;text-align:center;font-size:12px;line-height:14px;color:#333"><span class="c">启用</span></div>
<div class="a nw" style="left:1104px;top:767px;font-size:12px;line-height:16px;color:#333">张三<br><span style="letter-spacing:0.3px">139857642374</span></div>
<div class="a" style="left:1222px;top:770px;width:16px;height:16px;background:#0a5cf0"></div>
<div class="a nw" style="left:1222px;top:772px;width:16px;text-align:center;font-size:12px;line-height:14px;color:#fff">自</div>
<div class="a nw" style="left:1339px;top:773px;width:81px;text-align:center;font-size:12px;line-height:14px;color:#333;font-size:12px">√</div>
<div class="a btn" style="left:1594px;top:771px;width:67px;height:20px"></div>
<div class="a nw" style="left:1594px;top:775px;width:67px;text-align:center;font-size:12px;line-height:14px;color:#000"><span class="c">管理网点</span></div>
<div class="a btn" style="left:1677px;top:771px;width:67px;height:20px"></div>
<div class="a nw" style="left:1677px;top:775px;width:67px;text-align:center;font-size:12px;line-height:14px;color:#000"><span class="c">管理员工</span></div>
<div class="a btn" style="left:1755px;top:771px;width:67px;height:20px"></div>
<div class="a nw" style="left:1755px;top:775px;width:67px;text-align:center;font-size:12px;line-height:14px;color:#000"><span class="c">编辑</span></div>
<div class="a btn" style="left:1841px;top:771px;width:80px;height:20px"></div>
<div class="a nw" style="left:1841px;top:775px;width:67px;text-align:center;font-size:12px;line-height:14px;color:#000"><span class="c">结算报表</span></div>
<div class="a nw" style="left:491px;top:843px;font-size:11px;line-height:14px;color:#333">共136条 每页显示20条</div>
<div class="a" style="left:1600px;top:833px;width:320px;height:29px;border:1px solid #ddd;border-radius:4px 0 0 4px;background:#fff"></div>
<div class="a" style="left:1655px;top:834px;width:29px;height:28px;background:#4288e6"></div>
<div class="a" style="left:1712px;top:834px;width:1px;height:27px;background:#ddd"></div>
<div class="a" style="left:1740px;top:834px;width:1px;height:27px;background:#ddd"></div>
<div class="a" style="left:1769px;top:834px;width:1px;height:27px;background:#ddd"></div>
<div class="a" style="left:1797px;top:834px;width:1px;height:27px;background:#ddd"></div>
<div class="a" style="left:1825px;top:834px;width:1px;height:27px;background:#ddd"></div>
<div class="a" style="left:1854px;top:834px;width:1px;height:27px;background:#ddd"></div>
<div class="a nw" style="left:1600px;top:840px;width:57px;text-align:center;font-size:11px;line-height:14px;color:#666">上一页</div>
<div class="a nw" style="left:1655px;top:841px;width:30px;text-align:center;font-size:11px;line-height:14px;color:#fff">1</div>
<div class="a nw" style="left:1685px;top:841px;width:27px;text-align:center;font-size:11px;line-height:14px;color:#4a8be8">2</div>
<div class="a nw" style="left:1712px;top:841px;width:28px;text-align:center;font-size:11px;line-height:14px;color:#4a8be8">3</div>
<div class="a nw" style="left:1740px;top:841px;width:29px;text-align:center;font-size:11px;line-height:14px;color:#4a8be8">4</div>
<div class="a nw" style="left:1769px;top:841px;width:28px;text-align:center;font-size:11px;line-height:14px;color:#4a8be8">5</div>
<div class="a nw" style="left:1797px;top:841px;width:28px;text-align:center;font-size:11px;line-height:14px;color:#4a8be8">6</div>
<div class="a nw" style="left:1825px;top:841px;width:29px;text-align:center;font-size:11px;line-height:14px;color:#4a8be8">7</div>
<div class="a nw" style="left:1866px;top:840px;font-size:11px;line-height:14px;color:#4a8be8">下一页</div>
<!--/TABLE-->
<!--CONTENT-->

<!-- ===== scrollbars ===== -->
<div class="a" style="left:1904px;top:97px;width:16px;height:1047px;background:#ebebeb"></div>
<svg class="a" style="left:1908px;top:103px" width="8" height="5"><path d="M0 4.5L4 0.5L8 4.5Z" fill="#3a3a3a"/></svg>
<div class="a" style="left:1904px;top:115px;width:16px;height:942px;border:1px solid #8a8a8a;border-radius:2px;background:linear-gradient(90deg,#f2f2f2 0%,#e6e6e6 45%,#cfcfd3 60%,#c6c6ca 100%)"></div>
<div class="a" style="left:1908px;top:582px;width:7px;height:1px;background:#555"></div>
<div class="a" style="left:1908px;top:585px;width:7px;height:1px;background:#555"></div>
<div class="a" style="left:1908px;top:588px;width:7px;height:1px;background:#555"></div>
<svg class="a" style="left:1908px;top:1133px" width="8" height="5"><path d="M0 0.5L4 4.5L8 0.5Z" fill="#3a3a3a"/></svg>
<div class="a" style="left:265px;top:1143px;width:1639px;height:17px;background:#ebebeb"></div>
<svg class="a" style="left:270px;top:1147px" width="6" height="10"><path d="M5.5 0.5L1 5L5.5 9.5Z" fill="#333"/></svg>
<div class="a" style="left:283px;top:1144px;width:1470px;height:16px;border:1px solid #8a8a8a;border-radius:2px;background:linear-gradient(#f4f4f4 0%,#ececec 45%,#d6d6d8 55%,#cacacd 100%)"></div>
<div class="a" style="left:1014px;top:1148px;width:1px;height:7px;background:#444"></div>
<div class="a" style="left:1017px;top:1148px;width:1px;height:7px;background:#444"></div>
<div class="a" style="left:1020px;top:1148px;width:1px;height:7px;background:#444"></div>
<svg class="a" style="left:1890px;top:1147px" width="6" height="10"><path d="M0.5 0.5L5 5L0.5 9.5Z" fill="#333"/></svg>
<div class="a" style="left:1904px;top:1143px;width:16px;height:17px;background:#ececec"></div>
<div id="taskbar" class="a"></div>
<div class="a" style="left:0;top:1160px;width:1920px;height:1px;background:#0b1c1e"></div>
<div class="a" style="left:0;top:1161px;width:1920px;height:1px;background:#5c8a8d"></div>
<div class="a" style="left:10px;top:1161px;width:32px;height:7px;border-radius:16px 16px 0 0;background:#9fb6c4;border:1px solid #d0dde5"></div>
<div class="a" style="left:60px;top:1161px;width:58px;height:7px;background:linear-gradient(#a9b9ba,#6f8586);border-radius:2px 2px 0 0"></div>
<div class="a" style="left:85px;top:1163px;width:16px;height:5px;border-radius:8px 8px 0 0;background:#d64b3c"></div>
<div class="a" style="left:122px;top:1161px;width:58px;height:7px;background:linear-gradient(#a9b9ba,#6f8586);border-radius:2px 2px 0 0"></div>
<div class="a" style="left:143px;top:1163px;width:16px;height:5px;border-radius:8px 8px 0 0;background:#2a7fd0"></div>
<div class="a" style="left:184px;top:1161px;width:58px;height:7px;background:linear-gradient(#d8e2e2,#a9b9ba);border-radius:2px 2px 0 0"></div>
<div class="a" style="left:205px;top:1164px;width:16px;height:4px;border-radius:8px 8px 0 0;background:#4fb8e8"></div>
<div class="a" style="left:260px;top:1163px;width:32px;height:5px;border-radius:6px 6px 0 0;background:#3aa0ff"></div>
<div class="a" style="left:308px;top:1161px;width:50px;height:7px;background:linear-gradient(#a9b9ba,#6f8586);border-radius:2px 2px 0 0"></div>
<div class="a" style="left:370px;top:1161px;width:50px;height:7px;background:linear-gradient(#a9b9ba,#6f8586);border-radius:2px 2px 0 0"></div>
<div class="a" style="left:432px;top:1161px;width:58px;height:7px;background:linear-gradient(#a9b9ba,#6f8586);border-radius:2px 2px 0 0"></div>
<div class="a" style="left:494px;top:1161px;width:58px;height:7px;background:linear-gradient(#a9b9ba,#6f8586);border-radius:2px 2px 0 0"></div>
<div class="a" style="left:508px;top:1163px;width:30px;height:5px;border-radius:6px 6px 0 0;background:#4cb6f0"></div>
<div class="a" style="left:556px;top:1161px;width:58px;height:7px;background:linear-gradient(#a9b9ba,#6f8586);border-radius:2px 2px 0 0"></div>
<div class="a" style="left:568px;top:1163px;width:32px;height:5px;border-radius:6px 6px 0 0;background:#22c43a"></div>
<div class="a" style="left:1905px;top:1161px;width:15px;height:7px;background:linear-gradient(#8a9a9a,#5a6a6a)"></div>

</body></html>
